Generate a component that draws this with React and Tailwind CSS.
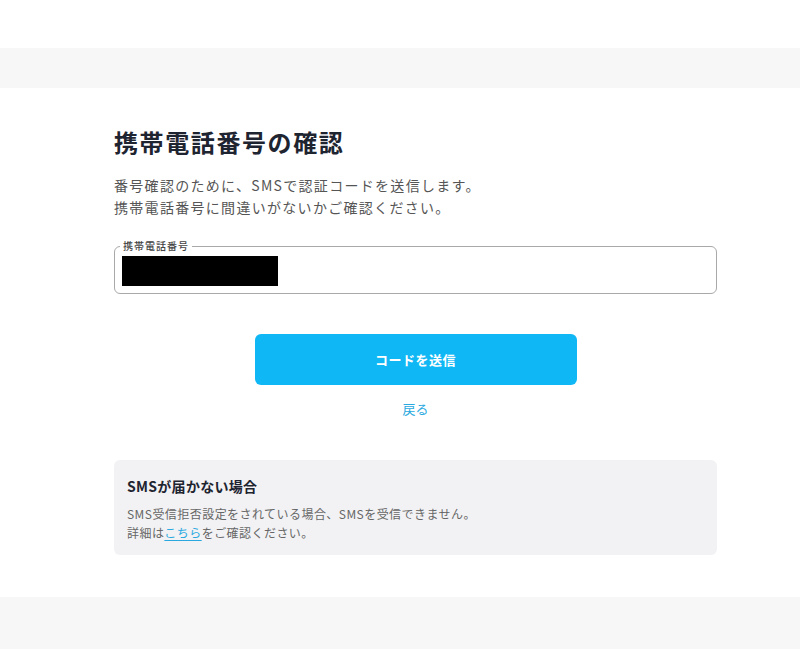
import React from 'react';

const App = () => {
  return (
    <div
      className="min-h-[649px] flex flex-col bg-white text-[#222]"
      style={{ fontFamily: '"Noto Sans CJK JP", "Noto Sans", sans-serif' }}
    >
      {/* top spacer + gray band */}
      <div className="h-12 bg-white" />
      <div className="h-10 bg-[#f7f7f7]" />

      {/* Main card */}
      <main className="bg-white h-[509px] pt-[36px]">
        <div className="ml-[114px] w-[603px] flex flex-col">
          <h1 className="text-[24px] leading-[36px] font-bold tracking-[1.6px] text-[#1e2430]">
            携帯電話番号の確認
          </h1>

          <div className="mt-[14px] text-[14px] leading-[22px] text-[#555] tracking-[1.3px]">
            <p>番号確認のために、SMSで認証コードを送信します。</p>
            <p>携帯電話番号に間違いがないかご確認ください。</p>
          </div>

          {/* Phone input */}
          <fieldset className="mt-[23px] h-[53px] border border-[#a9a9a9] rounded-[6px] px-[7px]">
            <legend className="-ml-[2px] px-[3px] text-[10px] leading-[10px] text-[#444] font-medium tracking-[1px]">
              携帯電話番号
            </legend>
            <div className="mt-[5px] w-[156px] h-[30px] bg-black" />
          </fieldset>

          {/* Send button */}
          <button className="mt-[40px] mx-auto w-[322px] h-[51px] rounded-[6px] bg-[#10b7f5] text-white text-[13px] font-bold tracking-[0.5px]">
            コードを送信
          </button>

          <a className="mt-[14px] mx-auto text-[13px] leading-[20px] text-[#2aa9e0]" href="#">
            戻る
          </a>

          {/* Notice box */}
          <div className="mt-[41px] h-[95px] rounded-[6px] bg-[#f2f2f4] px-[13px] pt-[16px]">
            <p className="text-[14px] leading-[20px] font-bold tracking-[0.3px] text-[#1e2430]">SMSが届かない場合</p>
            <div className="mt-[8px] text-[12px] leading-[19px] tracking-[0.45px] text-[#666]">
              <p>SMS受信拒否設定をされている場合、SMSを受信できません。</p>
              <p>
                詳細は
                <a href="#" className="text-[#2aa9e0] underline underline-offset-2">
                  こちら
                </a>
                をご確認ください。
              </p>
            </div>
          </div>
        </div>
      </main>

      <div className="flex-1 bg-[#f7f7f7]" />
    </div>
  );
};

export default App;
